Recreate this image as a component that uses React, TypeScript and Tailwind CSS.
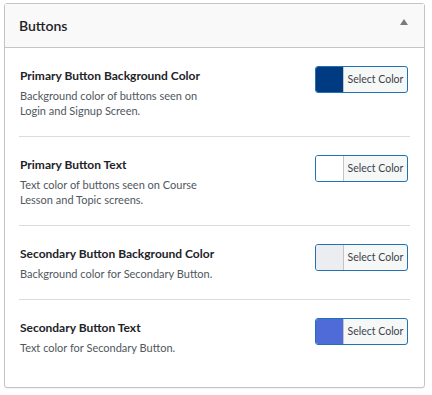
import React from "react"

const rows = [
  {
    label: "Primary Button Background Color",
    desc: ["Background color of buttons seen on", "Login and Signup Screen."],
    color: "bg-[#003a80]",
  },
  {
    label: "Primary Button Text",
    desc: ["Text color of buttons seen on Course", "Lesson and Topic screens."],
    color: "bg-white",
  },
  {
    label: "Secondary Button Background Color",
    desc: ["Background color for Secondary Button."],
    color: "bg-[#ebedf0]",
  },
  {
    label: "Secondary Button Text",
    desc: ["Text color for Secondary Button."],
    color: "bg-[#4f6bd8]",
  },
]

function ColorButton({ color }: { color: string }) {
  return (
    <button className="flex h-[27px] w-[93px] shrink-0 overflow-hidden rounded-[3px] border border-[#2271b1] bg-[#f6f7f7]">
      <span className={`h-full w-[28px] border-r border-[#c3c4c7] ${color}`} />
      <span className="flex h-full flex-1 items-center justify-center text-[10.5px] text-[#3c434a]">
        Select Color
      </span>
    </button>
  )
}

export default function App() {
  return (
    <div className="h-[395px] w-[432px] bg-white pl-[4px] pt-[3px] font-['Lato',sans-serif]">
      <div className="w-[421px] rounded-[3px] border border-[#c3c4c7] bg-white shadow-[0_1px_1px_rgba(0,0,0,0.06)]">
        {/* header */}
        <div className="flex h-[44px] items-center justify-between border-b border-[#c3c4c7] bg-[#f9f9f9] pl-[14px] pr-[16px]">
          <h2 className="text-[14px] font-semibold text-[#1d2327]">Buttons</h2>
          <span className="mb-[8px] h-0 w-0 border-x-[4px] border-b-[6px] border-x-transparent border-b-[#787c82]" />
        </div>

        {/* rows */}
        <div className="px-[14px] pb-[14px]">
          {rows.map((r, i) => (
            <div
              key={r.label}
              className={`flex items-start justify-between pb-[18px] pl-px pr-[2px] pt-[18px] ${
                i < rows.length - 1 ? "border-b border-[#dcdcde]" : ""
              }`}
            >
              <div>
                <div className="text-[12px] font-bold leading-[20px] text-[#1d2327]">
                  {r.label}
                </div>
                <div className="mt-[2px] text-[11px] leading-[15px] text-[#50575e]">
                  {r.desc.map((d) => (
                    <div key={d}>{d}</div>
                  ))}
                </div>
              </div>
              <div>
                <ColorButton color={r.color} />
              </div>
            </div>
          ))}
        </div>
      </div>
    </div>
  )
}
